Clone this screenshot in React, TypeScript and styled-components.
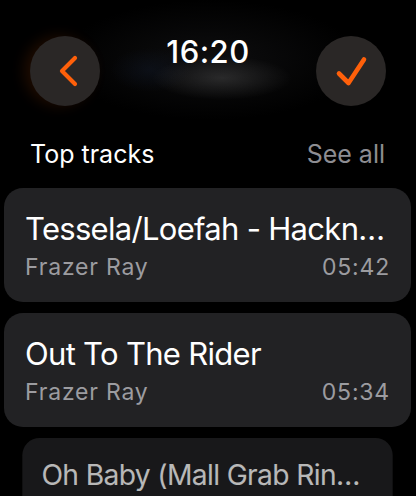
import * as React from "react";
import styled, { createGlobalStyle } from "styled-components";

const ORANGE = "#ff600a";

const GlobalStyle = createGlobalStyle`
  html, body {
    margin: 0;
    padding: 0;
    background: #000;
  }
  body {
    font-family: Inter, "Noto Sans", "Liberation Sans", sans-serif;
    color: #fff;
    -webkit-font-smoothing: antialiased;
  }
`;

const Screen = styled.div`
  width: 416px;
  height: 496px;
  overflow: hidden;
  background:
    radial-gradient(ellipse 70px 22px at 222px 78px, rgba(255, 255, 255, 0.13), rgba(255, 255, 255, 0) 100%),
    radial-gradient(ellipse 40px 22px at 150px 70px, rgba(20, 30, 50, 0.35), rgba(0, 0, 0, 0) 100%),
    radial-gradient(ellipse 150px 60px at 210px 60px, rgba(40, 40, 44, 0.35), rgba(0, 0, 0, 0) 100%),
    #000;
`;

const TopBar = styled.header`
  display: flex;
  align-items: flex-start;
  justify-content: space-between;
  padding: 33px 30px 0;
`;

const RoundButton = styled.button<{ $glow?: boolean }>`
  width: 70px;
  height: 70px;
  margin-top: 3px;
  border: none;
  border-radius: 50%;
  background: #2a2726;
  display: flex;
  align-items: center;
  justify-content: center;
  padding: 0;
  box-shadow: ${(p) => (p.$glow ? "-6px 0 14px rgba(255, 96, 10, 0.12)" : "none")};
`;

const Clock = styled.div`
  font-size: 31px;
  line-height: 37px;
  font-weight: 500;
  letter-spacing: 0.5px;
`;

const SectionHead = styled.div`
  display: flex;
  justify-content: space-between;
  align-items: baseline;
  padding: 0 31px 0 30px;
  margin-top: 33px;
  font-size: 25px;
  line-height: 30px;
`;

const SeeAll = styled.span`
  color: #8d8d92;
`;

const List = styled.div`
  display: flex;
  flex-direction: column;
  gap: 11px;
  padding: 19px 5px 0 4px;
`;

const Card = styled.div<{ $far?: boolean }>`
  background: #222224;
  border-radius: 19px;
  padding: 22px 21px 21px;
  transform: ${(p) => (p.$far ? "scale(0.91)" : "none")};
  transform-origin: top center;
  opacity: ${(p) => (p.$far ? 0.72 : 1)};
`;

const Title = styled.div`
  font-size: 31px;
  line-height: 37px;
  letter-spacing: -0.7px;
  white-space: nowrap;
  overflow: hidden;
  text-overflow: ellipsis;
`;

const Meta = styled.div`
  display: flex;
  justify-content: space-between;
  margin-top: 6px;
  font-size: 23px;
  line-height: 28px;
  letter-spacing: 0.8px;
  color: #9c9ca0;
`;

const tracks = [
  { title: "Tessela/Loefah - Hackney Parrot", artist: "Frazer Ray", time: "05:42" },
  { title: "Out To The Rider", artist: "Frazer Ray", time: "05:34" },
  { title: "Oh Baby (Mall Grab Rinse)", artist: "Frazer Ray", time: "06:01" },
];

export default function App() {
  return (
    <>
      <GlobalStyle />
      <Screen>
        <TopBar>
          <RoundButton $glow aria-label="Back">
            <svg width="70" height="70" viewBox="0 0 70 70">
              <path
                d="M45 22 L32 35 L45 48"
                fill="none"
                stroke={ORANGE}
                strokeWidth="4.2"
                strokeLinecap="round"
                strokeLinejoin="round"
              />
            </svg>
          </RoundButton>
          <Clock>16:20</Clock>
          <RoundButton aria-label="Done">
            <svg width="70" height="70" viewBox="0 0 70 70">
              <path
                d="M23 37.5 L32.5 47 L48 23.5"
                fill="none"
                stroke={ORANGE}
                strokeWidth="4.6"
                strokeLinecap="round"
                strokeLinejoin="round"
              />
            </svg>
          </RoundButton>
        </TopBar>
        <SectionHead>
          <span>Top tracks</span>
          <SeeAll>See all</SeeAll>
        </SectionHead>
        <List>
          {tracks.map((t, i) => (
            <Card key={t.title} $far={i === 2}>
              <Title>{t.title}</Title>
              <Meta>
                <span>{t.artist}</span>
                <span>{t.time}</span>
              </Meta>
            </Card>
          ))}
        </List>
      </Screen>
    </>
  );
}
